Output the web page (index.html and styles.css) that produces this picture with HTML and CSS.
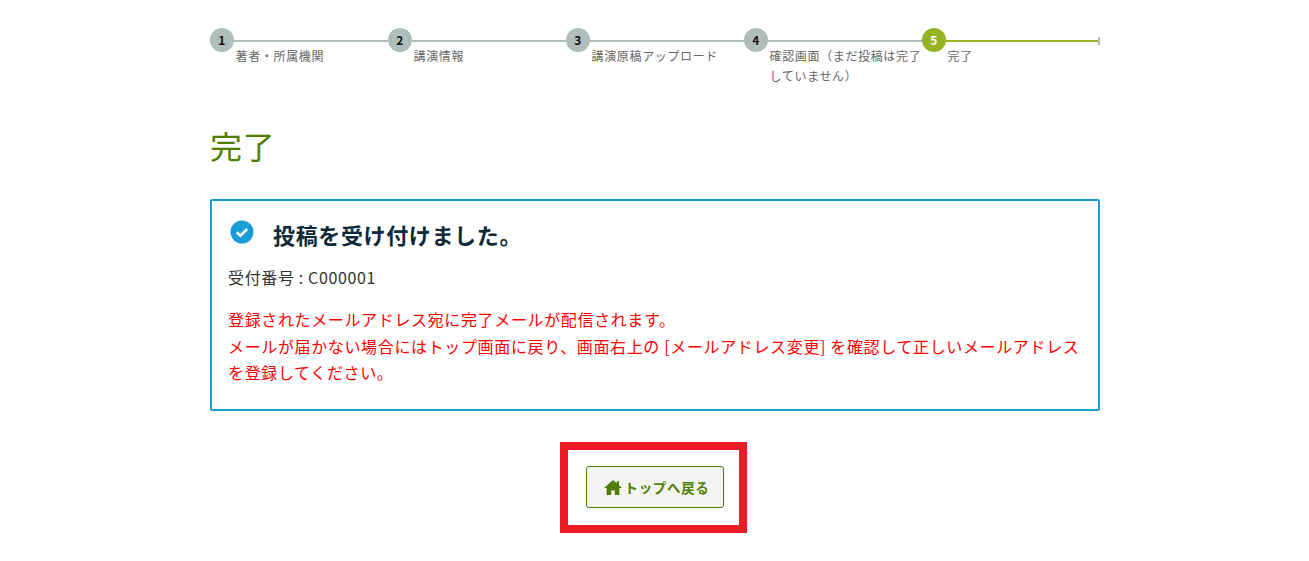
FILE: index.html
```html
<!DOCTYPE html>
<html lang="ja">
	<head>
		<meta charset="UTF-8" />
		<title>完了</title>
		<link rel="stylesheet" href="styles.css">
	</head>
	<body>
		<div class="wrap">
			<ol class="steps">
				<li class="step"><span class="num">1</span><span class="label">著者・所属機関</span></li>
				<li class="step"><span class="num">2</span><span class="label">講演情報</span></li>
				<li class="step"><span class="num">3</span><span class="label">講演原稿アップロード</span></li>
				<li class="step"><span class="num">4</span><span class="label">確認画面（まだ投稿は完了していません）</span></li>
				<li class="step current"><span class="num">5</span><span class="label">完了</span></li>
			</ol>

			<h1 class="title">完了</h1>

			<div class="notice">
				<h2 class="notice-head">
					<svg class="check" viewBox="0 0 24 24" width="24" height="24">
						<circle cx="12" cy="12" r="11.500" fill="#1a9cd8" />
						<path d="M6.800 12.300l3.500 3.300 6.900-6.600" fill="none" stroke="#fff" stroke-width="2.600" />
					</svg>
					投稿を受け付けました。
				</h2>
				<p class="receipt">受付番号 : C000001</p>
				<p class="warn">登録されたメールアドレス宛に完了メールが配信されます。<br>メールが届かない場合にはトップ画面に戻り、画面右上の [メールアドレス変更] を確認して正しいメールアドレスを登録してください。</p>
			</div>

			<div class="actions">
				<div class="highlight">
					<a class="btn" href="#">
						<svg viewBox="0 0 18 15" width="18" height="15">
							<path d="M9 0L0 8h2.600v7h4.600v-4.600h3.600V15h4.600V8H18l-3-2.700V1.200h-2.200v2.100z" fill="#4f7f00" />
						</svg>
						トップへ戻る
					</a>
				</div>
			</div>
		</div>
	</body>
</html>
```

FILE: styles.css
```css
* {
	box-sizing: border-box;
}
body {
	margin: 0;
	background: #fff;
	color: #333;
	font-family: "Noto Sans CJK JP", "Noto Sans", sans-serif;
	letter-spacing: 0.04em;
}
.wrap {
	width: 890px;
	margin-left: 210px;
	padding-top: 28px;
}

/* steps */
.steps {
	display: flex;
	list-style: none;
	margin: 0;
	padding: 0;
	height: 56px;
}
.step {
	width: 178px;
	position: relative;
	background: linear-gradient(#b0bebb, #b0bebb) no-repeat 0 12px / 100% 2px;
}
.step.current {
	background-image: linear-gradient(#96b422, #96b422);
}
.step.current::after {
	content: "";
	position: absolute;
	right: 0;
	top: 9px;
	width: 2px;
	height: 8px;
	background: #b0bebb;
}
.num {
	position: absolute;
	left: 0;
	top: 0;
	width: 24px;
	height: 24px;
	border-radius: 50%;
	background: #b0bebb;
	color: #111;
	font-size: 12px;
	font-weight: 700;
	line-height: 24px;
	text-align: center;
}
.current .num {
	background: #96b422;
	color: #fff;
}
.label {
	display: block;
	padding: 18px 0 0 25.600px;
	font-size: 12px;
	line-height: 20px;
	color: #666;
}

.title {
	margin: 39px 0 0;
	font-size: 32px;
	font-weight: 400;
	line-height: 44px;
	color: #4f7f00;
}

/* notice */
.notice {
	margin-top: 32px;
	height: 212px;
	padding: 19px 16px 0;
	border: 2px solid #1a9cd8;
	border-radius: 2px;
}
.notice-head {
	display: flex;
	align-items: flex-start;
	gap: 19px;
	margin: 0 0 0 2px;
	height: 33px;
	font-size: 22px;
	font-weight: 700;
	line-height: 28px;
	color: #0e2a3a;
}
.receipt {
	margin: 11px 0 0;
	font-size: 16px;
	line-height: 26px;
	color: #333;
}
.warn {
	margin: 16px 0 0;
	font-size: 16px;
	line-height: 26.500px;
	color: #f00;
}

/* actions */
.actions {
	display: flex;
	justify-content: center;
	margin-top: 31px;
}
.highlight {
	width: 187px;
	height: 91px;
	margin-left: -3px;
	padding: 16px 0 0 18px;
	border: 8px solid #ed1c24;
}
.btn {
	display: flex;
	align-items: center;
	justify-content: center;
	gap: 3px;
	width: 138px;
	height: 42px;
	padding-left: 3px;
	border: 1px solid #4f7f00;
	border-radius: 3px;
	background: #f3f5f4;
	color: #4f7f00;
	font-size: 13.500px;
	font-weight: 700;
	text-decoration: none;
}
```
